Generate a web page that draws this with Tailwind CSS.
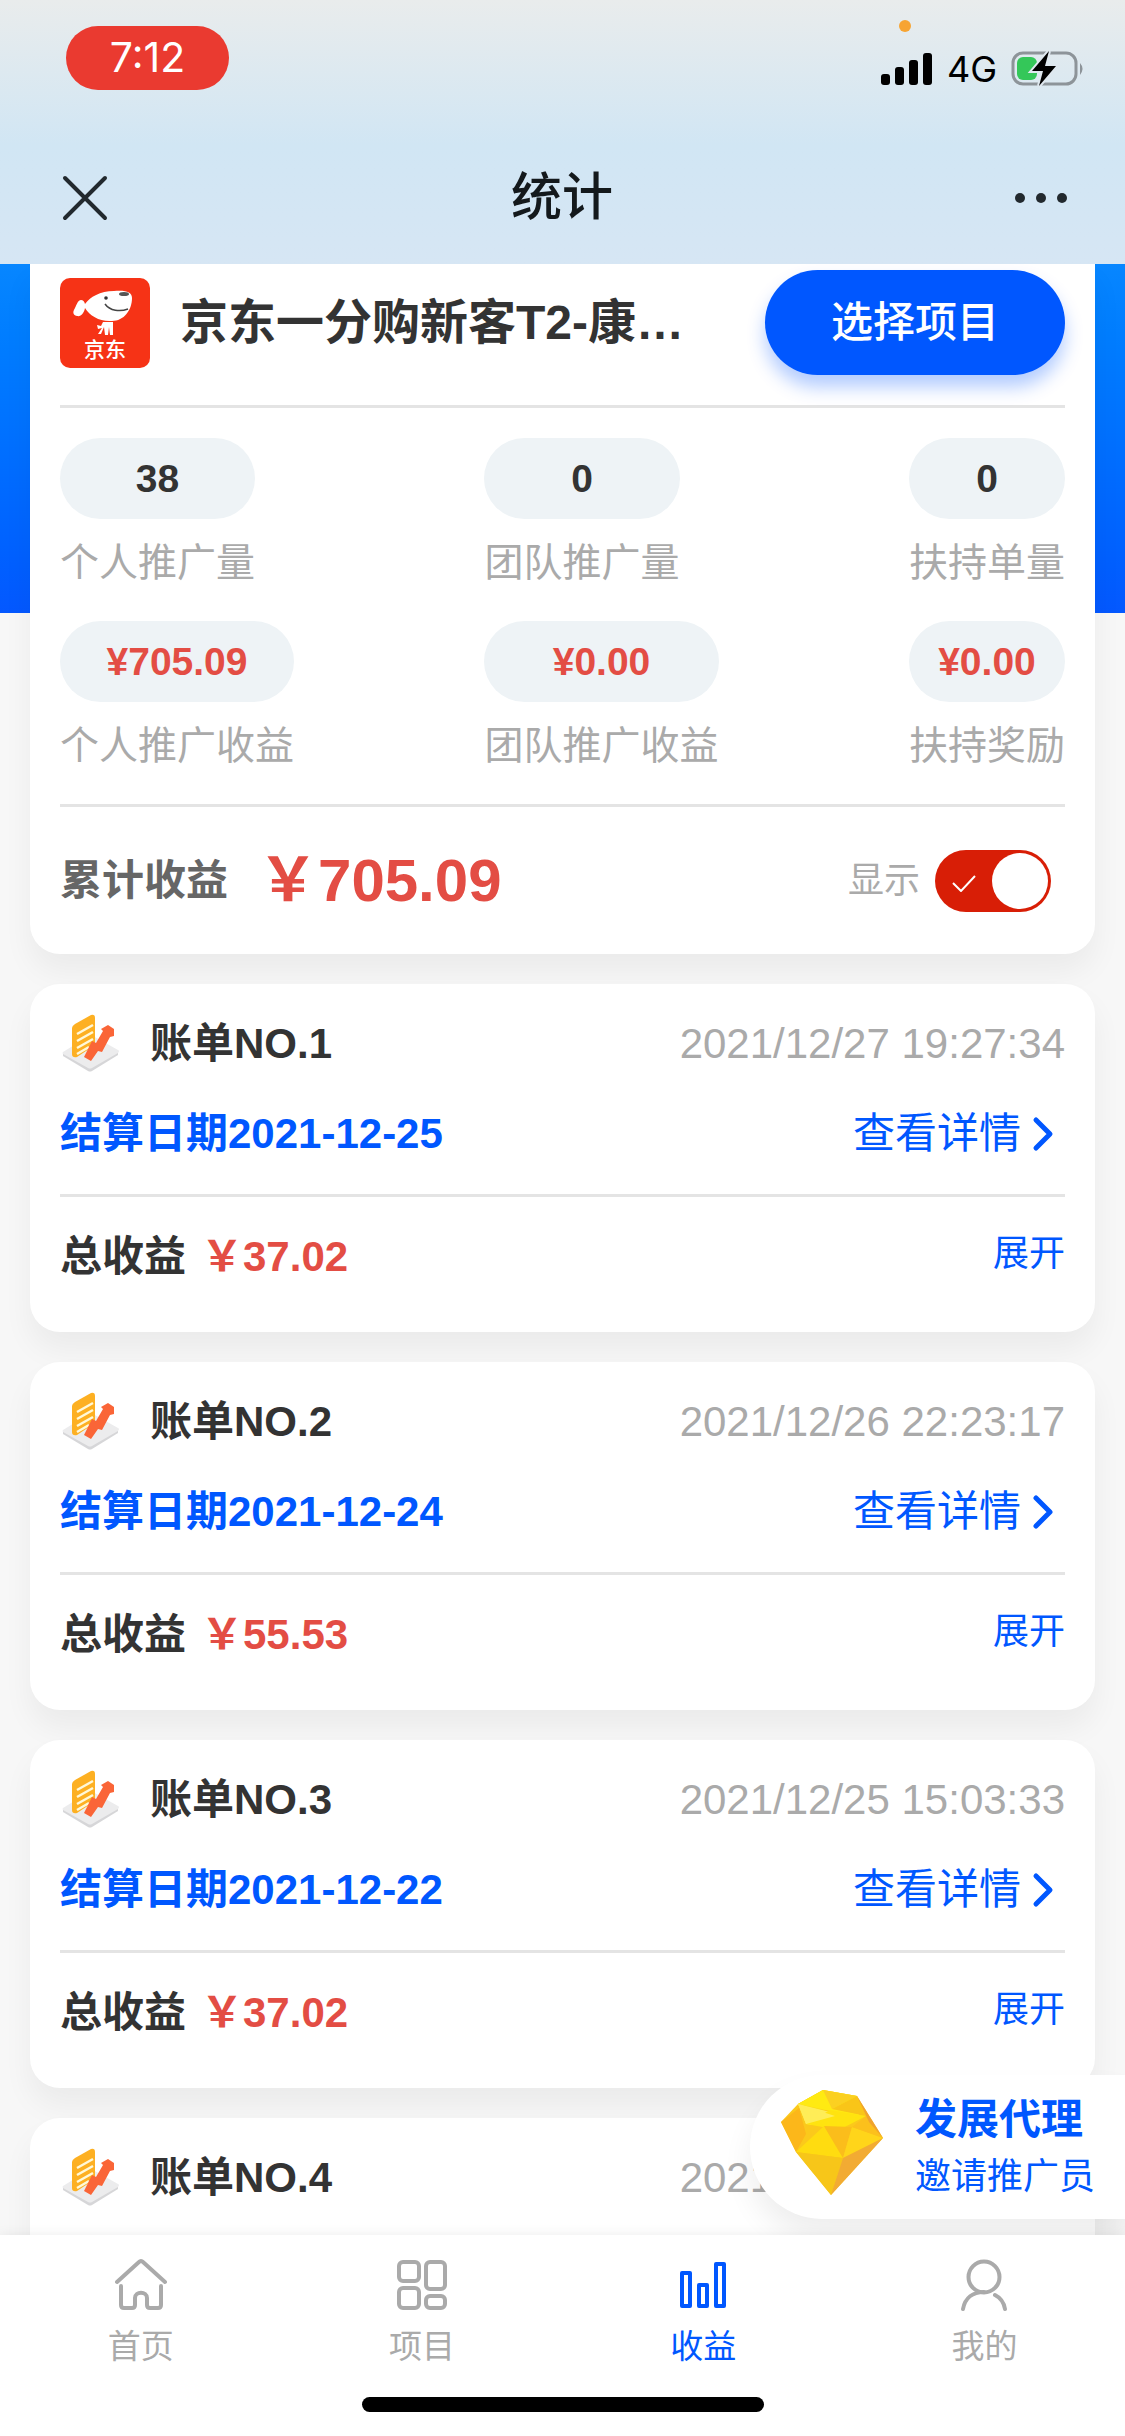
<!DOCTYPE html>
<html lang="zh-CN">
<head>
    <meta charset="UTF-8">
    <meta name="viewport" content="width=device-width, initial-scale=1.0">
    <title>统计</title>
    <script src="https://cdn.jsdelivr.net/npm/@tailwindcss/browser@4"></script>
</head>
<body class="relative flex flex-col h-screen overflow-hidden bg-[#f7f7f7] text-[#333] font-['Liberation_Sans','Noto_Sans_CJK_SC',sans-serif]">

    <header class="shrink-0 bg-linear-to-b from-[#e9ecec] via-[#d1e6f4] via-55% to-[#d6e6f4]">
        <!-- Status bar -->
        <div class="relative flex items-start justify-between h-[132px] pl-[66px] pr-10 pt-[26px] font-[Inter,sans-serif] text-black">
            <div class="flex items-center justify-center w-[163px] h-16 rounded-full bg-[#ea3a30] text-white text-[41px]">7:12</div>
            <div class="flex items-center gap-[14px] h-[34px] mt-[26px]">
                <svg class="w-[52px] h-[34px]" viewBox="0 0 52 34" aria-hidden="true">
                    <rect x="0" y="22" width="9" height="11" rx="3"/>
                    <rect x="14" y="15" width="9" height="18" rx="3"/>
                    <rect x="28" y="8" width="9" height="25" rx="3"/>
                    <rect x="42" y="1" width="9" height="32" rx="3"/>
                </svg>
                <span class="text-[36px] leading-[34px]">4G</span>
                <svg class="w-[74px] h-[36px]" viewBox="0 0 74 36" aria-hidden="true">
                    <rect x="2" y="2" width="63" height="31" rx="10" fill="none" stroke="#8d9499" stroke-width="3"/>
                    <path d="M69 12q5 5.500 0 12z" fill="#8d9499"/>
                    <rect x="6" y="6" width="20" height="23" rx="6" fill="#34c759"/>
                    <path d="M38 0L21 20h11l-4 15 17-20H34z" stroke="#dfe8ef" stroke-width="4" paint-order="stroke"/>
                </svg>
            </div>
            <span class="absolute top-5 right-[214px] size-3 rounded-full bg-[#f7a432]"></span>
        </div>
        <!-- Title bar -->
        <div class="flex items-center justify-between h-[132px] pl-[60px] pr-[57px]">
            <button aria-label="关闭">
                <svg class="size-[50px]" viewBox="0 0 50 50" fill="none" stroke="#22292e" stroke-width="4" stroke-linecap="round"><path d="M5 5l40 40M45 5L5 45"/></svg>
            </button>
            <h1 class="text-[51px] leading-[60px] font-medium text-[#14191c]">统计</h1>
            <button aria-label="更多">
                <svg class="w-[54px] h-[50px]" viewBox="0 0 54 50" fill="#22292e"><circle cx="6" cy="25" r="5"/><circle cx="27" cy="25" r="5"/><circle cx="48" cy="25" r="5"/></svg>
            </button>
        </div>
    </header>

    <main class="relative flex-1 min-h-0 overflow-hidden px-[30px]">
        <div class="absolute inset-x-0 top-0 h-[349px] bg-linear-to-b from-[#0786ff] to-[#0458ff]"></div>

        <!-- Summary -->
        <section class="relative px-[30px] pt-[6px] bg-white rounded-b-[30px] shadow-[0_18px_30px_rgba(0,0,0,0.05)]">
            <div class="flex items-center pb-[30px] border-b-3 border-[#e4e4e4]">
                <svg class="shrink-0 size-[90px]" viewBox="0 0 90 90" role="img" aria-label="京东">
                    <rect width="90" height="90" rx="10" fill="#f63316"/>
                    <path d="M25 26C30 19 40 13 54 13c12-1 18 1 18 7 0 12-8 23-20 23-12 1-22-5-27-13-1 5-4 9-8 8-5-1-4-5-2-8 2-4 3-8 6-8q3 0 4 4z" fill="#fff"/>
                    <path d="M43 44h10v13h-3l-1-8-1 8h-3l-1-8-3 7h-3l4-6-4 1-1-4 4 1z" fill="#fff"/>
                    <circle cx="46" cy="20" r="1.800" fill="#333"/>
                    <ellipse cx="64" cy="16" rx="5" ry="2" fill="#555"/>
                    <path d="M45 26c5 7 15 8 23 5" fill="none" stroke="#444" stroke-width="1.500"/>
                    <text x="45" y="79" text-anchor="middle" font-size="21" font-weight="500" fill="#fff" font-family="Noto Sans CJK SC, sans-serif">京东</text>
                </svg>
                <h2 class="flex-1 min-w-0 ml-[30px] mr-16 truncate text-[48px] leading-[60px] font-bold">京东一分购新客T2-康…</h2>
                <button class="shrink-0 w-[300px] h-[105px] rounded-full bg-[#0057ff] text-white text-[42px] font-medium shadow-[0_12px_18px_rgba(0,87,255,0.3)]">选择项目</button>
            </div>

            <div class="flex justify-between pt-[30px] text-[39px] leading-[60px]">
                <dl class="flex flex-col items-start gap-7">
                    <div class="flex flex-col-reverse gap-[14px]">
                        <dt class="text-[#aaa]">个人推广量</dt>
                        <dd class="h-[81px] rounded-full bg-[#eef3f6] text-center leading-[81px] font-bold">38</dd>
                    </div>
                    <div class="flex flex-col-reverse gap-[14px]">
                        <dt class="text-[#aaa]">个人推广收益</dt>
                        <dd class="h-[81px] rounded-full bg-[#eef3f6] text-center leading-[81px] font-bold text-[#e34d44]">¥705.09</dd>
                    </div>
                </dl>
                <dl class="flex flex-col items-start gap-7">
                    <div class="flex flex-col-reverse gap-[14px]">
                        <dt class="text-[#aaa]">团队推广量</dt>
                        <dd class="h-[81px] rounded-full bg-[#eef3f6] text-center leading-[81px] font-bold">0</dd>
                    </div>
                    <div class="flex flex-col-reverse gap-[14px]">
                        <dt class="text-[#aaa]">团队推广收益</dt>
                        <dd class="h-[81px] rounded-full bg-[#eef3f6] text-center leading-[81px] font-bold text-[#e34d44]">¥0.00</dd>
                    </div>
                </dl>
                <dl class="flex flex-col items-start gap-7">
                    <div class="flex flex-col-reverse gap-[14px]">
                        <dt class="text-[#aaa]">扶持单量</dt>
                        <dd class="h-[81px] rounded-full bg-[#eef3f6] text-center leading-[81px] font-bold">0</dd>
                    </div>
                    <div class="flex flex-col-reverse gap-[14px]">
                        <dt class="text-[#aaa]">扶持奖励</dt>
                        <dd class="h-[81px] rounded-full bg-[#eef3f6] text-center leading-[81px] font-bold text-[#e34d44]">¥0.00</dd>
                    </div>
                </dl>
            </div>

            <div class="flex items-center h-[150px] mt-7 border-t-3 border-[#e4e4e4]">
                <span class="text-[42px] leading-[60px] font-bold text-[#666]">累计收益</span>
                <span class="ml-[30px] text-[60px] leading-[60px] font-bold text-[#e34d44]">&#xFFE5;705.09</span>
                <label for="showTotal" class="ml-auto mr-[15px] text-[36px] leading-[60px] text-[#aaa]">显示</label>
                <span class="relative mr-[14px] w-[116px] h-[62px]">
                    <input type="checkbox" id="showTotal" checked class="block size-full appearance-none rounded-full bg-[#ccc] checked:bg-[#d81e06] before:absolute before:left-[3px] before:top-[3px] before:size-14 before:rounded-full before:bg-white checked:before:left-[57px]">
                    <svg class="absolute left-[17px] top-6 w-6 h-[18px] pointer-events-none" viewBox="0 0 24 18" fill="none" stroke="#fff" stroke-width="2"><path d="M1 9l8 8L23 2"/></svg>
                </span>
            </div>
        </section>

        <!-- Bills are inserted here -->
        <div id="bills"></div>
    </main>

    <a href="#invite" class="absolute right-0 bottom-[217px] flex items-center w-[375px] h-36 pl-[31px] rounded-l-full bg-white text-[#0057ff] shadow-[0_18px_30px_rgba(0,0,0,0.07)]">
        <svg class="shrink-0 w-[103px] h-[106px] mb-2" viewBox="0 0 103 106" aria-hidden="true">
            <path d="M42 0L76 6 102 48 50 105 15 62 0 32 17 14z" fill="#fbc91b"/>
            <path d="M42 0L17 14l9 19 22-16z" fill="#fbd616"/>
            <path d="M17 14l9 19-8-15-18 14 15 30 10-18z" fill="#fcb71a"/>
            <path d="M42 0L17 14l32 7L78 26 76 6z" fill="#ffea12"/>
            <path d="M17 14L57 24 43 36 25 34z" fill="#ffed57"/>
            <path d="M42 0l34 6-25 13z" fill="#fbd021"/>
            <path d="M76 6l9 20-34-7z" fill="#f9c518"/>
            <path d="M49 20l36 6-27 14-33-6z" fill="#ffe30f"/>
            <path d="M17 14l37 12-29 8z" fill="#ffed57"/>
            <path d="M43 36L15 62l47 6z" fill="#ffdc10"/>
            <path d="M43 36l28 1-9 31z" fill="#fbbd1b"/>
            <path d="M71 37l31 11-40 20z" fill="#ffd51a"/>
            <path d="M85 26l17 22-31-11z" fill="#fcc01c"/>
            <path d="M76 6l26 42-14-16z" fill="#f0a22e"/>
            <path d="M15 62l47 6-12 37z" fill="#f7c619"/>
            <path d="M102 48L62 68 50 105z" fill="#f2ab33"/>
        </svg>
        <span class="flex flex-col ml-[31px]">
            <span class="text-[42px] leading-[60px] font-bold">发展代理</span>
            <span class="text-[36px] leading-[54px] whitespace-nowrap">邀请推广员</span>
        </span>
    </a>

    <nav class="relative shrink-0 h-[201px] bg-white shadow-[0_0_12px_rgba(0,0,0,0.08)] text-[33px] leading-[48px] text-[#aaa]">
        <div class="grid grid-cols-4 pt-6">
            <a href="#home" class="flex flex-col items-center gap-3">
                <svg class="size-[52px]" viewBox="0 0 52 52" fill="none" stroke="currentColor" stroke-width="4" stroke-linecap="round" stroke-linejoin="round"><path d="M2 23L24 3q2-2 4 0l22 20M6 27v19q0 3 3 3h8q3 0 3-3V39c0-7 12-7 12 0v7q0 3 3 3h8q3 0 3-3V27"/></svg>
                首页
            </a>
            <a href="#projects" class="flex flex-col items-center gap-3">
                <svg class="size-[52px]" viewBox="0 0 52 52" fill="none" stroke="currentColor" stroke-width="4"><rect x="3" y="3" width="20" height="19" rx="4"/><rect x="30" y="3" width="19" height="27" rx="4"/><rect x="3" y="29" width="20" height="20" rx="4"/><rect x="30" y="37" width="19" height="12" rx="4"/></svg>
                项目
            </a>
            <a href="#income" aria-current="page" class="flex flex-col items-center gap-3 text-[#0057ff]">
                <svg class="size-[52px]" viewBox="0 0 52 52" fill="none" stroke="currentColor" stroke-width="4" stroke-linejoin="round"><rect x="5" y="14" width="8" height="33"/><rect x="22" y="26" width="8" height="21"/><rect x="39" y="5" width="8" height="42"/></svg>
                收益
            </a>
            <a href="#me" class="flex flex-col items-center gap-3">
                <svg class="size-[52px]" viewBox="0 0 52 52" fill="none" stroke="currentColor" stroke-width="4" stroke-linecap="round"><circle cx="26" cy="18" r="15.500"/><path d="M5 50c2-11 10-17 21-17M37 36c6 3 9 8 10 14"/></svg>
                我的
            </a>
        </div>
        <div class="absolute inset-x-0 bottom-6 mx-auto w-[402px] h-[15px] rounded-full bg-black"></div>
    </nav>

    <script>
        const bills = [
            { no: 1, time: '2021/12/27 19:27:34', date: '2021-12-25', total: '37.02' },
            { no: 2, time: '2021/12/26 22:23:17', date: '2021-12-24', total: '55.53' },
            { no: 3, time: '2021/12/25 15:03:33', date: '2021-12-22', total: '37.02' },
            { no: 4, time: '2021/12/23 18:40:12', date: '2021-12-21', total: '37.02' }
        ];

        document.getElementById('bills').innerHTML = bills.map(bill => `
            <article class="relative mt-[30px] px-[30px] pt-[30px] pb-[45px] bg-white rounded-[30px] shadow-[0_18px_30px_rgba(0,0,0,0.05)] text-[42px] leading-[60px]">
                <div class="flex items-center">
                    <svg class="size-[60px]" viewBox="0 0 60 60" aria-hidden="true">
                        <path d="M3 39v3l25 15q2 1 4 0l26-16v-3z" fill="#d6d6d8"/>
                        <path d="M3 38l26-16q2-1 4 0l25 14q2 1 0 3L32 54q-2 1-4 0L3 40q-1-1 0-2z" fill="#ececed"/>
                        <path d="M12 14Q12 12 15 10L31 1q4-1 4 3v27L17 43q-5 1-5-3z" fill="#fdb022"/>
                        <path d="M17 20l16-9M17 27l16-9M17 34l16-9M17 40l12-7" stroke="#fff8d8" stroke-width="2.500"/>
                        <path d="M24 43l8-16 4 2 7-12-2-2 7-4 6 4v7l-4 1-8 15-4-1-7 10z" fill="#fa6537"/>
                    </svg>
                    <h3 class="ml-[30px] font-bold">账单NO.${bill.no}</h3>
                    <time class="ml-auto text-[#aaa]">${bill.time}</time>
                </div>
                <div class="flex items-center justify-between mt-[30px] pb-[30px] border-b-3 border-[#e4e4e4] text-[#0057ff]">
                    <span class="font-bold">结算日期${bill.date}</span>
                    <a href="#bill-${bill.no}" class="flex items-center gap-[10px] pr-[10px]">
                        查看详情
                        <svg class="w-6 h-9" viewBox="0 0 24 36" fill="none" stroke="currentColor" stroke-width="5" stroke-linecap="round" stroke-linejoin="round"><path d="M5 4l14 14L5 32"/></svg>
                    </a>
                </div>
                <div class="flex items-start pt-[30px]">
                    <span class="font-bold">总收益</span>
                    <span class="ml-[15px] font-bold text-[#e34d44]">&#xFFE5;${bill.total}</span>
                    <button class="ml-auto text-[36px] leading-[54px] text-[#0057ff]">展开</button>
                </div>
            </article>
        `).join('');
    </script>
</body>
</html>
